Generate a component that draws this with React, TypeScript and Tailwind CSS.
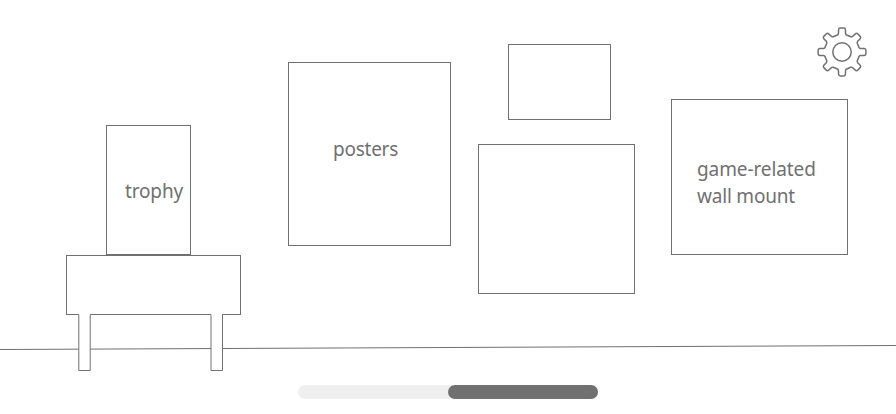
const TEETH = [0, 45, 90, 135, 180, 225, 270, 315];

function gearOutline() {
  const parts = TEETH.map((deg, i) => {
    const a = (deg * Math.PI) / 180;
    const p = (x: number, y: number) =>
      `${(25 + x * Math.cos(a) - y * Math.sin(a)).toFixed(2)} ${(25 + x * Math.sin(a) + y * Math.cos(a)).toFixed(2)}`;
    return [
      `${i === 0 ? "M" : "L"}${p(-4.6, -17)}`,
      `Q${p(-3.7, -17.4)} ${p(-3.6, -18.3)}`,
      `L${p(-3.4, -22.3)}`,
      `Q${p(-3.3, -23.9)} ${p(-1.8, -23.9)}`,
      `L${p(1.8, -23.9)}`,
      `Q${p(3.3, -23.9)} ${p(3.4, -22.3)}`,
      `L${p(3.6, -18.3)}`,
      `Q${p(3.7, -17.4)} ${p(4.6, -17)}`,
    ].join(" ");
  });
  return parts.join(" ") + " Z";
}

function Gear() {
  return (
    <svg width="50" height="50" viewBox="0 0 50 50" className="block" fill="none" stroke="#707070" strokeWidth="1.5" strokeLinejoin="round">
      <path d={gearOutline()} />
      <circle cx="25" cy="25" r="9.2" />
    </svg>
  );
}

function Table() {
  return (
    <svg width="175" height="116" viewBox="0 0 175 116" className="block" fill="white" stroke="#707070">
      <rect x="0.5" y="0.5" width="174" height="59" />
      <path d="M12.8 59V115.5H24.2V59" />
      <path d="M145 59V115.5H156.5V59" />
      <path d="M13.3 59.5H23.7M145.5 59.5H156" stroke="white" strokeWidth="2" />
    </svg>
  );
}

export default function App() {
  return (
    <main className="relative isolate h-[414px] w-[896px] overflow-hidden bg-white font-['Noto_Sans',sans-serif] text-[19px] leading-[27px] text-[#707070]">
      <svg className="absolute inset-0 -z-10" width="896" height="414" viewBox="0 0 896 414">
        <line x1="0" y1="349.5" x2="896" y2="345.5" stroke="#707070" />
      </svg>
      <div className="flex h-[385px] items-start pl-[66px]">
        <section className="flex w-[175px] flex-col pt-[125px]">
          <div className="ml-[40px] h-[130px] w-[85px] border border-[#707070] pt-[52px] pl-[18px]">
            <span className="block w-max tracking-[-0.15px]">trophy</span>
          </div>
          <Table />
        </section>
        <section className="mt-[62px] ml-[47px] h-[184px] w-[163px] border border-[#707070] pt-[73px] pl-[44px]">
          <span className="block w-max tracking-[-0.25px]">posters</span>
        </section>
        <section className="ml-[27px] flex w-[157px] flex-col gap-6 pt-[44px]">
          <div className="ml-[30px] h-[76px] w-[103px] border border-[#707070]" />
          <div className="h-[150px] border border-[#707070]" />
        </section>
        <section className="ml-[36px] flex w-[196px] flex-col gap-[22px] pt-[27px]">
          <button type="button" aria-label="Settings" className="self-end">
            <Gear />
          </button>
          <div className="h-[156px] w-[177px] border border-[#707070] pt-[56px] pl-[25px]">
            <span className="block w-max tracking-[-0.1px]">game-related</span>
            <span className="block w-max tracking-[-0.2px]">wall mount</span>
          </div>
        </section>
      </div>
      <div className="mx-auto flex h-[14px] w-[300px] justify-end rounded-full bg-[#efefef]">
        <div className="w-1/2 rounded-full bg-[#707070]" />
      </div>
    </main>
  );
}
